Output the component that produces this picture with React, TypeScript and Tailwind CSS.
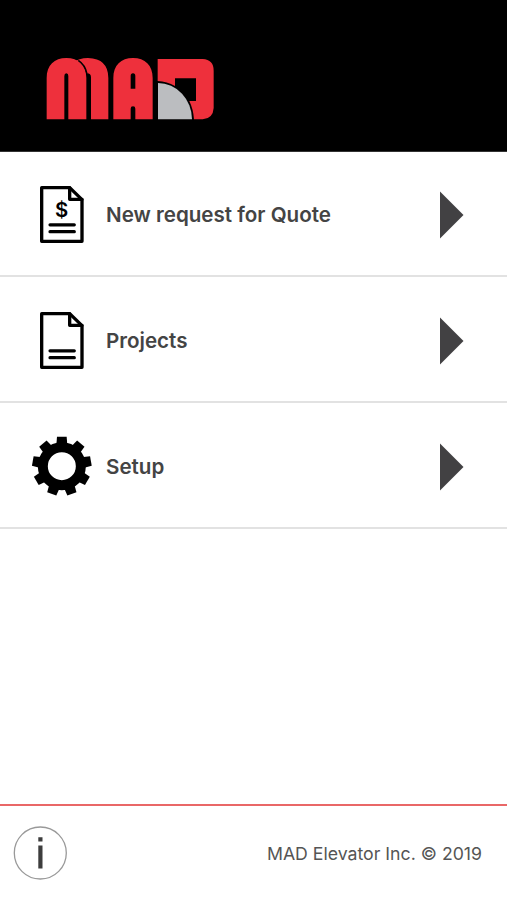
import type { ReactNode } from "react";

function Logo() {
  return (
    <svg viewBox="0 0 570 240" className="ml-9 mt-12 h-20 w-[190px]" aria-label="MAD">
      <g fill="#ee303c">
        <path d="M112 44Q128 30 156 30Q217 32 217 90V214H165V88Q165 76 153 76Q147 54 125 38Z" />
        <path d="M32 214V90C32 52 55 30 91 30S151 52 151 90V214H97V84Q97 76 91 76T85 84V214Z" />
        <path
          fillRule="evenodd"
          d="M232 214V90C232 52 255 30 291 30S350 52 350 90V214H298V182Q298 175 291 175T284 182V214ZM284 122H298V84Q298 76 291 76T284 84Z"
        />
        <path
          fillRule="evenodd"
          d="M365 33H500Q533 35 533 68V180Q531 212 500 214H474Q472 184 460 159H480V91H417V114Q393 100 365 99Z"
        />
      </g>
      <path d="M127 37Q148 51 153 77" fill="none" stroke="#000" strokeWidth="4" />
      <path d="M366 105A102 109 0 0 1 468 214H366Z" fill="#bbbdc0" />
    </svg>
  );
}

function DocumentIcon({ priced = false }: { priced?: boolean }) {
  return (
    <svg viewBox="0 0 240 240" className="size-20" fill="none" stroke="#000" strokeLinejoin="round" strokeLinecap="round">
      <path d="M50 38H134L171 74V199H50Z" strokeWidth="10" />
      <path d="M134 38V73H171" strokeWidth="10" />
      <path d="M75 149.500H148M75 170H148" strokeWidth="9.500" />
      {priced && (
        <text
          x="110"
          y="127"
          textAnchor="middle"
          fill="#000"
          stroke="none"
          className="font-['Inter',sans-serif] text-[61px] font-semibold"
        >
          $
        </text>
      )}
    </svg>
  );
}

function GearIcon() {
  return (
    <svg viewBox="0 0 240 240" className="size-20">
      <circle cx="110.500" cy="117.500" r="57" fill="none" stroke="#000" strokeWidth="30" />
      {[0, 40, 80, 120, 160, 200, 240, 280, 320].map((angle) => (
        <path key={angle} d="M94 55L96 29H125L127 55Z" transform={`rotate(${angle} 110.500 117.500)`} />
      ))}
    </svg>
  );
}

function MenuRow({ icon, label, className }: { icon: ReactNode; label: string; className: string }) {
  return (
    <button className={`flex w-full items-center border-b-2 border-[#e2e2e2] pl-[25px] pr-[43px] text-left ${className}`}>
      {icon}
      <span className="ml-px flex-1 whitespace-nowrap text-[20.6px] font-semibold leading-7 text-[#444444]">{label}</span>
      <svg viewBox="0 0 25 48" className="h-12 w-[25px]">
        <path d="M1 .500V47.500L24.500 24Z" fill="#424143" />
      </svg>
    </button>
  );
}

export default function App() {
  return (
    <div className="flex h-[900px] w-[507px] flex-col overflow-hidden bg-white font-['Inter',sans-serif]">
      <header className="h-[152px] shrink-0 border-b border-[#333333] bg-black">
        <Logo />
      </header>
      <main className="flex-1">
        <MenuRow icon={<DocumentIcon priced />} label="New request for Quote" className="h-[125px] pt-[3px]" />
        <MenuRow icon={<DocumentIcon />} label="Projects" className="h-[126px] pt-1" />
        <MenuRow icon={<GearIcon />} label="Setup" className="h-[126px] pt-1" />
      </main>
      <footer className="flex h-24 items-center justify-between border-t-2 border-[#e96767] pl-[13px] pr-[25px]">
        <svg viewBox="0 0 54 54" className="size-[54px]">
          <circle cx="27.300" cy="27" r="26" fill="none" stroke="#999999" strokeWidth="1.300" />
          <path d="M25.300 11.200H29.500V15.600H25.300ZM25.300 19.500H29.500V42.500H25.300Z" fill="#3d3d3d" />
        </svg>
        <span className="whitespace-nowrap pt-0.5 text-[17.7px] leading-6 text-[#555555]">MAD Elevator Inc. © 2019</span>
      </footer>
    </div>
  );
}
